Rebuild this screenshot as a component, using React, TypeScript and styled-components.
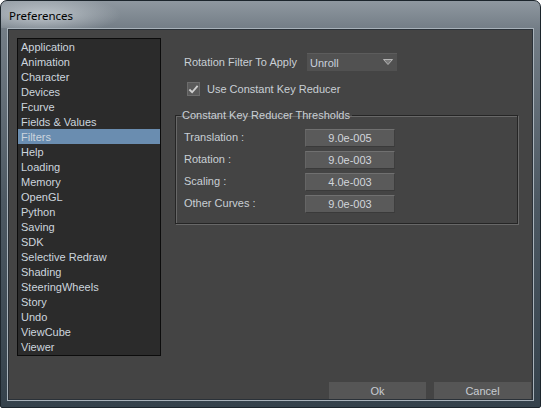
import React from 'react'
import styled, { createGlobalStyle } from 'styled-components'

const GlobalStyle = createGlobalStyle`
html, body {
margin: 0;
padding: 0;
background: #ffffff;
}
`

const items = [
  'Application', 'Animation', 'Character', 'Devices', 'Fcurve', 'Fields & Values',
  'Filters', 'Help', 'Loading', 'Memory', 'OpenGL', 'Python', 'Saving', 'SDK',
  'Selective Redraw', 'Shading', 'SteeringWheels', 'Story', 'Undo', 'ViewCube', 'Viewer',
]

const thresholds = [
  { label: 'Translation :', value: '9.0e-005' },
  { label: 'Rotation :', value: '9.0e-003' },
  { label: 'Scaling :', value: '4.0e-003' },
  { label: 'Other Curves :', value: '9.0e-003' },
]

const App = () => {
  return (
    <>
      <GlobalStyle />
      <Window>
        <TitleBar>
          <Title>Preferences</Title>
        </TitleBar>
        <Client>
          <Body>
            <List>
              {items.map((item) => (
                <Item key={item} selected={item === 'Filters'}>{item}</Item>
              ))}
            </List>
            <Panel>
              <FilterRow>
                <Label>Rotation Filter To Apply</Label>
                <Dropdown>
                  <span>Unroll</span>
                  <svg width="10" height="7" viewBox="0 0 10 7">
                    <polygon points="0.5,0.5 9.5,0.5 5,5.5" fill="#7c7c7c" stroke="#b4b4b4" strokeWidth="1" />
                  </svg>
                </Dropdown>
              </FilterRow>
              <CheckRow>
                <CheckBox>
                  <svg width="12" height="11" viewBox="0 0 12 11">
                    <polyline points="1.5,5.5 4.5,8.5 10.5,1.5" fill="none" stroke="#d0d0d0" strokeWidth="2" />
                  </svg>
                </CheckBox>
                <Label>Use Constant Key Reducer</Label>
              </CheckRow>
              <Group>
                <Legend>Constant Key Reducer Thresholds</Legend>
                {thresholds.map((t) => (
                  <ValueRow key={t.label}>
                    <Label>{t.label}</Label>
                    <Field>{t.value}</Field>
                  </ValueRow>
                ))}
              </Group>
            </Panel>
          </Body>
          <Footer>
            <Button>Ok</Button>
            <Button>Cancel</Button>
          </Footer>
        </Client>
      </Window>
    </>
  )
}

export default App

const Window = styled.div`
width: 541px;
height: 408px;
box-sizing: border-box;
border: 1px solid #1c252c;
border-radius: 7px 7px 2px 2px;
background: linear-gradient(180deg, #8f98a0 0px, #737d86 28px, #4d5963 200px, #35424c 408px);
display: flex;
flex-direction: column;
overflow: hidden;
font-family: "Liberation Sans", Arial, sans-serif;
`

const TitleBar = styled.div`
height: 27px;
display: flex;
align-items: center;
padding-left: 8px;
background: radial-gradient(ellipse 80px 20px at 40px 14px, rgba(215, 221, 226, 0.7), rgba(215, 221, 226, 0) 100%);
`

const Title = styled.div`
font-family: "Noto Sans", "Open Sans", sans-serif;
font-size: 11.5px;
color: #000000;
margin-top: 1px;
`

const Client = styled.div`
margin: 0 6px 6px 6px;
flex: 1;
border: 1px solid #a8b2ba;
box-shadow: inset 0 0 0 1px #2a3138;
background: #444444;
display: flex;
flex-direction: column;
`

const Body = styled.div`
flex: 1;
display: flex;
gap: 14px;
padding: 9px 15px 0 9px;
`

const List = styled.div`
width: 143px;
height: 316px;
border: 1px solid #0c0c0c;
background: #2b2b2b;
display: flex;
flex-direction: column;
`

const Item = styled.div<{ selected?: boolean }>`
height: 15px;
line-height: 16px;
padding-left: 3px;
font-size: 11px;
color: #cdd5de;
background: ${(p) => (p.selected ? '#6a8db0' : 'transparent')};
white-space: nowrap;
`

const Panel = styled.div`
flex: 1;
display: flex;
flex-direction: column;
`

const Label = styled.span`
font-size: 11px;
color: #c9cfd5;
white-space: nowrap;
`

const FilterRow = styled.div`
display: flex;
align-items: center;
margin-top: 15px;
padding-left: 9px;
& > ${Label} {
width: 123px;
}
`

const Dropdown = styled.div`
width: 90px;
height: 18px;
box-sizing: border-box;
background: #515151;
border-top: 1px solid #5c5c5c;
display: flex;
align-items: center;
justify-content: space-between;
padding: 0 4px 0 3px;
font-size: 11px;
color: #c9d0dd;
`

const CheckRow = styled.div`
display: flex;
align-items: center;
gap: 7px;
margin-top: 11px;
padding-left: 12px;
`

const CheckBox = styled.div`
width: 13px;
height: 14px;
box-sizing: border-box;
background: #5a5a5a;
border: 1px solid #6c6c6c;
display: flex;
align-items: center;
justify-content: center;
`

const Group = styled.fieldset`
margin: 13px 0 0 0;
padding: 7px 0 10px 8px;
width: 343px;
box-sizing: border-box;
border: 1px solid #252525;
box-shadow: 1px 1px 0 #686868, inset 1px 1px 0 #686868;
display: flex;
flex-direction: column;
gap: 4px;
`

const Legend = styled.legend`
padding: 0 2px 0 1px;
margin-left: -3px;
font-size: 11px;
color: #c9cfd5;
line-height: 13px;
`

const ValueRow = styled.div`
display: flex;
align-items: center;
height: 18px;
& > ${Label} {
width: 121px;
margin-top: -3px;
}
`

const Field = styled.div`
width: 90px;
height: 18px;
box-sizing: border-box;
background: #5a5a5a;
border-top: 1px solid #707070;
border-left: 1px solid #656565;
border-bottom: 1px solid #3a3a3a;
border-right: 1px solid #3e3e3e;
display: flex;
align-items: center;
justify-content: center;
font-size: 11px;
color: #d2d6dc;
`

const Footer = styled.div`
display: flex;
justify-content: flex-end;
gap: 8px;
padding: 0 2px 1px 0;
`

const Button = styled.div`
width: 97px;
height: 17px;
background: #565656;
display: flex;
align-items: center;
justify-content: center;
font-size: 11px;
color: #c8ccd2;
`
